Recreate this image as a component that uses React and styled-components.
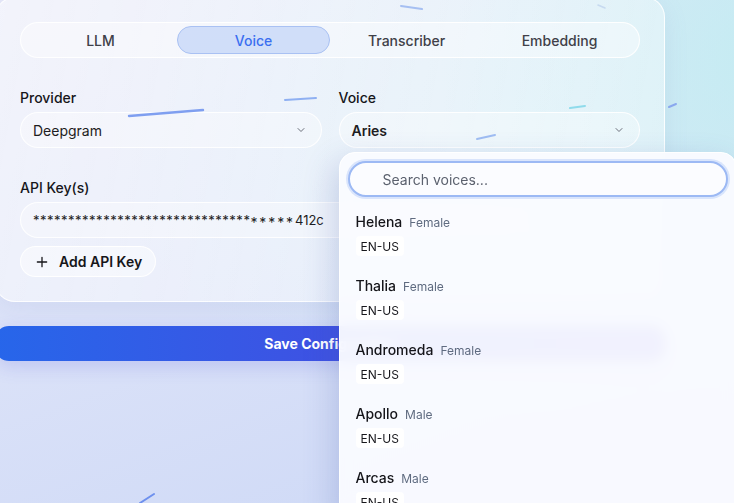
import React from "react";
import styled, { createGlobalStyle } from "styled-components";

const Global = createGlobalStyle`
  html, body { margin: 0; padding: 0; }
  body {
    font-family: Inter, "Noto Sans", "Liberation Sans", sans-serif;
    -webkit-font-smoothing: antialiased;
  }
  * { box-sizing: border-box; }
`;

const Page = styled.div`
  position: relative;
  width: 734px;
  height: 503px;
  overflow: hidden;
  background:
    radial-gradient(ellipse 320px 360px at 760px 60px, rgba(196, 236, 242, 0.95), rgba(196, 236, 242, 0) 100%),
    radial-gradient(ellipse 420px 300px at 520px 120px, rgba(214, 240, 246, 0.7), rgba(214, 240, 246, 0) 100%),
    linear-gradient(160deg, #e6e8f8 0%, #dbe2f8 45%, #cbd7f6 100%);
`;

const Column = styled.div`
  width: 670px;
  margin: -3px 0 0 -5px;
  display: flex;
  flex-direction: column;
  gap: 24px;
`;

const Card = styled.section`
  position: relative;
  padding: 24px 24px 24px;
  border-radius: 20px;
  background: linear-gradient(100deg, rgba(255, 255, 255, 0.5), rgba(255, 255, 255, 0.38));
  border: 1px solid rgba(255, 255, 255, 0.85);
  box-shadow: 0 6px 24px rgba(120, 140, 200, 0.12);
`;

const Tabs = styled.div`
  display: grid;
  grid-template-columns: repeat(4, 1fr);
  padding: 3px;
  border-radius: 999px;
  background: rgba(255, 255, 255, 0.38);
  border: 1px solid rgba(255, 255, 255, 0.95);
`;

const Tab = styled.div`
  height: 28px;
  display: flex;
  align-items: center;
  justify-content: center;
  border-radius: 999px;
  font-size: 14px;
  font-weight: 500;
  color: ${(p) => (p.$active ? "#3b6ef0" : "#404048")};
  background: ${(p) => (p.$active ? "rgba(196, 213, 248, 0.75)" : "transparent")};
  border: 1px solid ${(p) => (p.$active ? "#a9c1f3" : "transparent")};
`;

const Fields = styled.div`
  margin-top: 31px;
  display: grid;
  grid-template-columns: 1fr 1fr;
  column-gap: 17px;
  row-gap: 31px;
`;

const Field = styled.div`
  position: relative;
  display: flex;
  flex-direction: column;
  gap: 6px;
  grid-column: ${(p) => (p.$wide ? "1 / -1" : "auto")};
`;

const Label = styled.label`
  font-size: 14px;
  line-height: 17px;
  font-weight: 500;
  color: #16161a;
`;

const Select = styled.div`
  height: 36px;
  display: flex;
  align-items: center;
  justify-content: space-between;
  padding: 0 14px 0 12px;
  border-radius: 18px;
  background: rgba(255, 255, 255, 0.32);
  border: 1px solid rgba(255, 255, 255, 0.9);
  font-size: 14px;
  color: #1d1d22;
  font-weight: ${(p) => (p.$strong ? 600 : 400)};
`;

const Chevron = () => (
  <svg width="12" height="12" viewBox="0 0 24 24" fill="none" stroke="#6b6f7a" strokeWidth="2" strokeLinecap="round" strokeLinejoin="round">
    <path d="m6 9 6 6 6-6" />
  </svg>
);

const KeyInput = styled.div`
  height: 36px;
  display: flex;
  align-items: center;
  padding: 0 12px;
  border-radius: 18px;
  background: rgba(255, 255, 255, 0.32);
  border: 1px solid rgba(255, 255, 255, 0.9);
  font-size: 13px;
  color: #1d1d22;
  white-space: nowrap;
`;

const Mask = styled.span`
  letter-spacing: ${(p) => (p.$wide ? "1.9px" : "0.5px")};
  position: relative;
  top: ${(p) => (p.$wide ? "2px" : "0")};
  font-size: ${(p) => (p.$wide ? "14px" : "13px")};
  color: #1d1d22;
`;

const AddButton = styled.button`
  margin-top: 2px;
  align-self: flex-start;
  height: 31px;
  display: inline-flex;
  align-items: center;
  gap: 10px;
  padding: 0 13px 0 14px;
  border-radius: 999px;
  background: rgba(255, 255, 255, 0.45);
  border: 1px solid rgba(255, 255, 255, 0.95);
  font-family: inherit;
  font-size: 14px;
  font-weight: 600;
  color: #16161a;
`;

const SaveButton = styled.button`
  height: 35px;
  border: none;
  border-radius: 14px;
  background: linear-gradient(90deg, #2766ea 0%, #3e52e3 50%, #4f44dc 100%);
  color: #fff;
  font-family: inherit;
  font-size: 14px;
  font-weight: 700;
  box-shadow: 0 6px 18px rgba(70, 80, 220, 0.18);
`;

const Streaks = styled.svg`
  position: absolute;
  inset: 0;
  pointer-events: none;
`;

const Popover = styled.div`
  position: absolute;
  top: calc(100% + 4px);
  left: 0;
  width: 398px;
  height: 370px;
  padding: 8px;
  border-radius: 16px;
  background: rgba(250, 251, 255, 0.95);
  backdrop-filter: blur(6px);
  border: 1px solid rgba(255, 255, 255, 1);
  box-shadow: -6px 10px 30px rgba(70, 90, 170, 0.22);
  z-index: 5;
  overflow: hidden;
`;

const Search = styled.div`
  height: 36px;
  display: flex;
  align-items: center;
  padding-left: 33px;
  border-radius: 18px;
  background: #fbfcff;
  border: 2px solid #9cb9f4;
  box-shadow: 0 0 0 2px rgba(180, 202, 248, 0.45);
  font-size: 14px;
  color: #5b616e;
`;

const List = styled.div`
  margin-top: 8px;
  display: flex;
  flex-direction: column;
`;

const Item = styled.div`
  padding: 8px 8px 13px;
  display: flex;
  flex-direction: column;
  align-items: flex-start;
  gap: 6px;
`;

const NameRow = styled.div`
  display: flex;
  align-items: baseline;
  gap: 7px;
`;

const Name = styled.span`
  font-size: 14px;
  line-height: 17px;
  font-weight: 500;
  color: #15151a;
`;

const Gender = styled.span`
  font-size: 12px;
  color: #5f6b80;
`;

const Badge = styled.span`
  height: 20px;
  display: inline-flex;
  align-items: center;
  padding: 0 5px;
  border-radius: 4px;
  background: #ffffff;
  font-size: 12px;
  color: #17171c;
`;

const voices = [
  { name: "Helena", gender: "Female" },
  { name: "Thalia", gender: "Female" },
  { name: "Andromeda", gender: "Female" },
  { name: "Apollo", gender: "Male" },
  { name: "Arcas", gender: "Male" },
  { name: "Asteria", gender: "Female" },
];

const tabs = ["LLM", "Voice", "Transcriber", "Embedding"];

export default function App() {
  return (
    <Page>
      <Global />
      <Column>
        <Card>
          <Tabs>
            {tabs.map((t) => (
              <Tab key={t} $active={t === "Voice"}>{t}</Tab>
            ))}
          </Tabs>
          <Fields>
            <Field>
              <Label>Provider</Label>
              <Select>
                Deepgram
                <Chevron />
              </Select>
            </Field>
            <Field>
              <Label>Voice</Label>
              <Select $strong>
                Aries
                <Chevron />
              </Select>
              <Popover>
                <Search>Search voices...</Search>
                <List>
                  {voices.map((v) => (
                    <Item key={v.name}>
                      <NameRow>
                        <Name>{v.name}</Name>
                        <Gender>{v.gender}</Gender>
                      </NameRow>
                      <Badge>EN-US</Badge>
                    </Item>
                  ))}
                </List>
              </Popover>
            </Field>
            <Field $wide>
              <Label>API Key(s)</Label>
              <KeyInput>
                <Mask>{"*".repeat(31)}</Mask>
                <Mask $wide>{"*****"}</Mask>
                412c
              </KeyInput>
              <AddButton>
                <svg width="14" height="14" viewBox="0 0 24 24" fill="none" stroke="#16161a" strokeWidth="2.2" strokeLinecap="round">
                  <path d="M12 4v16M4 12h16" />
                </svg>
                Add API Key
              </AddButton>
            </Field>
          </Fields>
        </Card>
        <SaveButton>Save Configuration</SaveButton>
      </Column>
      <Streaks width="734" height="503" viewBox="0 0 734 503">
        <g strokeLinecap="round" fill="none">
          <path d="M129 116 L203 110" stroke="#7f9ff0" strokeWidth="2.4" />
          <path d="M285 100 L316 98" stroke="#8fb0f2" strokeWidth="2" />
          <path d="M401 6 L422 9" stroke="#a6bff2" strokeWidth="2" />
          <path d="M598 5 L605 8" stroke="#c7daf0" strokeWidth="1.6" />
          <path d="M570 108 L585 106" stroke="#8fdbeb" strokeWidth="2" />
          <path d="M477 139 L495 135" stroke="#9fbdf2" strokeWidth="2" />
          <path d="M669 107 L676 104" stroke="#8aa8ee" strokeWidth="2" />
          <path d="M140 503 L154 494" stroke="#6e90ee" strokeWidth="2" />
        </g>
      </Streaks>
    </Page>
  );
}
